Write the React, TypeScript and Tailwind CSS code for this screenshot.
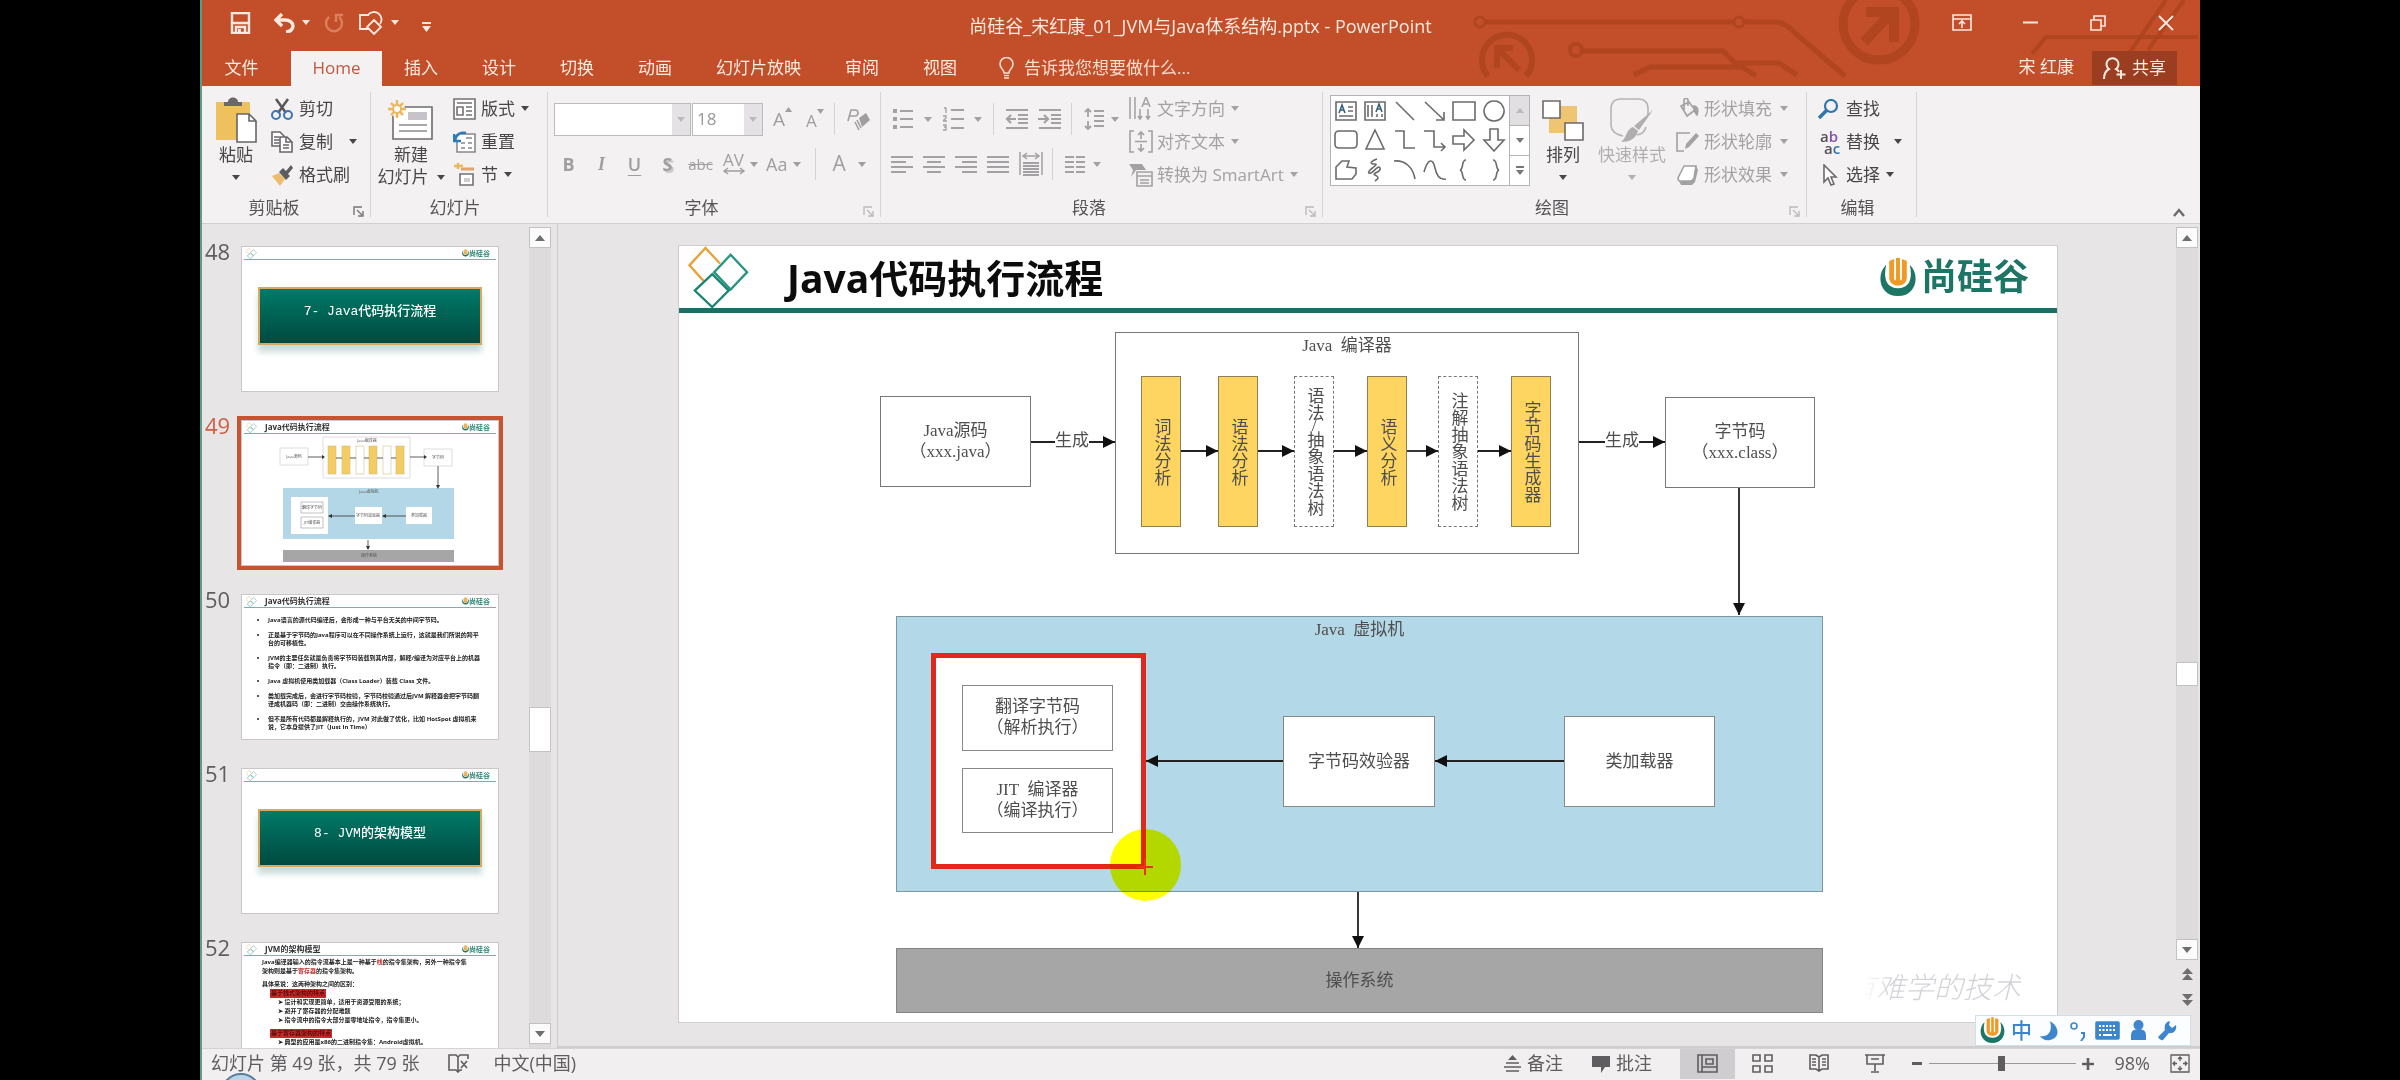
import React from "react";

type Kids = { children?: React.ReactNode };

/* ---------- primitives ---------- */

function Svg({ w, h, vb, className = "", children }: Kids & { w: number; h: number; vb?: string; className?: string }) {
  return (
    <svg width={w} height={h} viewBox={vb ?? `0 0 ${w} ${h}`} fill="none" stroke="currentColor" strokeWidth="1.6" className={`shrink-0 ${className}`} aria-hidden="true">
      {children}
    </svg>
  );
}

function Caret({ className = "" }: { className?: string }) {
  return (
    <Svg w={8} h={5} className={className}>
      <path d="M0 0h8L4 5z" fill="currentColor" stroke="none" />
    </Svg>
  );
}

function IconButton({ label, className = "", children }: Kids & { label: string; className?: string }) {
  return (
    <button type="button" aria-label={label} className={`flex shrink-0 items-center justify-center ${className}`}>
      {children}
    </button>
  );
}

function Sep({ className = "" }: { className?: string }) {
  return <span className={`h-8 w-px shrink-0 bg-[#d4d2d4] ${className}`} />;
}

function RowButton({ icon, text, caret, caretGap = "ml-1.5", muted }: { icon: React.ReactNode; text: string; caret?: boolean; caretGap?: string; muted?: boolean }) {
  return (
    <button type="button" className={`flex h-[33px] items-center whitespace-nowrap text-[17px] ${muted ? "text-[#a3a1a3]" : "text-[#484648]"}`}>
      <span className="flex w-[28px] shrink-0 items-center">{icon}</span>
      {text}
      {caret && <Caret className={caretGap} />}
    </button>
  );
}

function Group({ label, width, launcher, mutedLauncher, children }: Kids & { label: string; width: string; launcher?: boolean; mutedLauncher?: boolean }) {
  return (
    <section aria-label={label} className={`flex h-[125px] shrink-0 flex-col border-r border-[#d6d4d6] ${width}`}>
      <div className="flex h-[99px] items-start">{children}</div>
      <div className="flex h-[27px] items-end">
        <span className="flex-1 pr-2 text-center text-[17px] leading-[19px] text-[#555355]">{label}</span>
        {launcher && (
          <IconButton label={`${label}设置`} className={`mr-1.5 ${mutedLauncher ? "text-[#bcbabc]" : "text-[#777577]"}`}>
            <Svg w={11} h={11}>
              <path d="M1 9V1h8M4 4l5 5M10 5v5H5" strokeWidth="1.4" />
            </Svg>
          </IconButton>
        )}
      </div>
    </section>
  );
}

/* ---------- title bar ---------- */

function Circuit() {
  return (
    <svg viewBox="1460 0 740 86" className="absolute right-0 top-0 h-[86px] w-[740px]" fill="none" stroke="#a9421c" strokeOpacity="0.75" strokeWidth="5" aria-hidden="true">
      <circle cx="1480" cy="22" r="5" strokeWidth="3" />
      <path d="M1486 22H1733M1745 22h30c8 0 14 4 20 11l50 43" />
      <circle cx="1739" cy="22" r="5" strokeWidth="3" />
      <path d="M1488 76A25 25 0 1 1 1526 76" strokeWidth="6" />
      <path d="M1497 68V48h16M1499 50l20 20" strokeWidth="6" />
      <circle cx="1576" cy="50" r="6" strokeWidth="4" />
      <path d="M1583 51h140l12 12h44l18 12M1634 75l16-8h92l14 9" />
      <circle cx="1879" cy="24" r="36" strokeWidth="9" />
      <path d="M1864 42l28-30M1866 12h28v30" strokeWidth="10" />
      <path d="M2032 54l14-17h152" strokeWidth="4" />
      <path d="M2130 52l36-52M2148 50l36-50" strokeWidth="4" />
    </svg>
  );
}

function TitleBar() {
  return (
    <div className="relative grid h-[51px] grid-cols-[1fr_auto_1fr] items-center text-[#fde9df]">
      <div className="flex items-center pb-1.5 pl-[29px]">
        <IconButton label="保存">
          <Svg w={21} h={22}>
            <path d="M2 1h17v20H2zM2 11h17M6 21v-6h9v6" strokeWidth="2.400" />
            <path d="M8 17h3v4H8z" fill="currentColor" stroke="none" />
          </Svg>
        </IconButton>
        <IconButton label="撤消" className="ml-[22px]">
          <Svg w={22} h={20}>
            <path d="M3 7h9c5 0 8 3 8 6s-3 6-7 6" strokeWidth="3.400" />
            <path d="M9 1L3 7l6 6" strokeWidth="3.400" />
          </Svg>
        </IconButton>
        <Caret className="ml-[7px]" />
        <IconButton label="恢复" className="ml-3.5 text-[#dc7f5f]">
          <Svg w={20} h={20}>
            <path d="M5 4a8 8 0 1 0 10 0M19 2h-7v7" strokeWidth="2.400" />
          </Svg>
        </IconButton>
        <IconButton label="形状" className="ml-[15px]">
          <Svg w={26} h={24}>
            <path d="M9 18H1V4h9M9 4a7 7 0 1 1 12 9M15 9l7 7-7 7-7-7z" strokeWidth="1.800" />
          </Svg>
        </IconButton>
        <Caret className="ml-1.5" />
        <IconButton label="自定义快速访问工具栏" className="ml-[23px] pt-2">
          <Svg w={9} h={10}>
            <path d="M0 1h9" strokeWidth="2" />
            <path d="M0 4h9L4.500 10z" fill="currentColor" stroke="none" />
          </Svg>
        </IconButton>
      </div>
      <h1 className="text-[18px] leading-none">尚硅谷_宋红康_01_JVM与Java体系结构.pptx - PowerPoint</h1>
      <div className="flex justify-end pb-1.5">
        <IconButton label="功能区显示选项" className="h-10 w-[68px]">
          <Svg w={20} h={17}>
            <path d="M1 1h18v15H1zM1 5h18M10 14V7M7 10l3-3 3 3" />
          </Svg>
        </IconButton>
        <IconButton label="最小化" className="h-10 w-[68px]">
          <Svg w={15} h={3}>
            <path d="M0 1.500h15" strokeWidth="2" />
          </Svg>
        </IconButton>
        <IconButton label="还原" className="h-10 w-[68px]">
          <Svg w={16} h={16}>
            <path d="M1 5h10v10H1zM4 5V1h11v10h-4" />
          </Svg>
        </IconButton>
        <IconButton label="关闭" className="h-10 w-[68px]">
          <Svg w={16} h={16}>
            <path d="M1 1l14 14M15 1L1 15" strokeWidth="1.800" />
          </Svg>
        </IconButton>
      </div>
    </div>
  );
}

function TabBar() {
  const tabs = ["插入", "设计", "切换", "动画", "幻灯片放映", "审阅", "视图"];
  return (
    <nav className="relative flex h-[35px] text-[17px] text-[#fdebe2]">
      <button type="button" className="w-[81px] shrink-0 pb-0.5">文件</button>
      <button type="button" className="ml-[9px] w-[91px] shrink-0 bg-[#f3f1f2] pb-0.5 text-[#bd5a3c]">Home</button>
      {tabs.map((t) => (
        <button key={t} type="button" className="shrink-0 whitespace-nowrap px-[22px] pb-0.5">
          {t}
        </button>
      ))}
      <button type="button" className="ml-5 flex shrink-0 items-center whitespace-nowrap pb-0.5 text-[#fbdccd]">
        <Svg w={15} h={22} className="mr-2.5">
          <path d="M5 16c0-4-4-4-4-9a6.500 6.500 0 0 1 13 0c0 5-4 5-4 9zM5 18.500h5M5 21h5" />
        </Svg>
        告诉我您想要做什么...
      </button>
      <div className="ml-auto flex shrink-0 items-center pr-[23px]">
        <span className="pb-1">宋 红康</span>
        <button type="button" className="ml-[18px] flex h-[34px] w-[85px] items-center justify-center gap-1.5 self-start bg-[#9b3d20]">
          <Svg w={23} h={23}>
            <path d="M1 22c0-7 3-9 5-10a6 6 0 1 1 7 0c1 .5 2 1 3 3M18 13v9M13.500 17.500h9" strokeWidth="2" />
          </Svg>
          共享
        </button>
      </div>
    </nav>
  );
}

/* ---------- ribbon groups ---------- */

function BigButton({ icon, line1, line2, muted, className = "" }: { icon: React.ReactNode; line1: string; line2?: string; muted?: boolean; className?: string }) {
  return (
    <button type="button" className={`flex shrink-0 flex-col items-center pt-1 text-[17px] leading-[22px] ${muted ? "text-[#b0aeb0]" : "text-[#484648]"} ${className}`}>
      <span className="flex h-[48px] items-center">{icon}</span>
      <span className="whitespace-nowrap">{line1}</span>
      <span className="flex h-[22px] items-center whitespace-nowrap">
        {line2}
        <Caret className={line2 ? "ml-2" : ""} />
      </span>
    </button>
  );
}

function ClipboardGroup() {
  return (
    <Group label="剪贴板" width="w-[168px]" launcher>
      <BigButton
        className="ml-1.5 w-[54px]"
        line1="粘贴"
        icon={
          <Svg w={42} h={46}>
            <path d="M1 5h34v38H1z" fill="#efc15e" stroke="none" />
            <path d="M9 9V5h4c0-6 10-6 10 0h4v4z" fill="#6a686a" stroke="none" />
            <path d="M22 17h12l7 7v21H22z" fill="#fff" stroke="#666" />
            <path d="M34 17v7h7" stroke="#666" />
          </Svg>
        }
      />
      <div className="ml-2 flex flex-col">
        <RowButton
          text="剪切"
          icon={
            <Svg w={22} h={22}>
              <path d="M5 1l10 14M17 1L7 15" stroke="#59575a" strokeWidth="2.500" />
              <circle cx="5" cy="17" r="4" stroke="#3c74b4" strokeWidth="2" />
              <circle cx="17" cy="17" r="4" stroke="#3c74b4" strokeWidth="2" />
            </Svg>
          }
        />
        <RowButton
          text="复制"
          caret
          caretGap="ml-4"
          icon={
            <Svg w={22} h={22} className="text-[#686668]">
              <path d="M1 1h8l4 4v10H1zM3 6h5M3 9h5M3 12h5" fill="#fff" />
              <path d="M9 6h7l5 5v10H9z" fill="#fff" />
              <path d="M15 6v5h6M12 14h6M12 17h6" />
            </Svg>
          }
        />
        <RowButton
          text="格式刷"
          icon={
            <Svg w={22} h={22}>
              <path d="M1 12l7-3 6 6-5 7z" fill="#eebc6d" stroke="none" />
              <path d="M8 8l4-4 3 3 5-6 2 3-5 6 2 2-4 4z" fill="#5e5c5e" stroke="none" />
            </Svg>
          }
        />
      </div>
    </Group>
  );
}

function SlidesGroup() {
  return (
    <Group label="幻灯片" width="w-[177px]">
      <BigButton
        className="ml-1 w-[72px]"
        line1="新建"
        line2="幻灯片"
        icon={
          <Svg w={46} h={40}>
            <path d="M5 7h39v32H5z" fill="#fff" stroke="#6e6c6e" />
            <path d="M20 12h19v8H20z" fill="#c7c4c9" stroke="none" />
            <path d="M11 25h28M11 31h28" stroke="#8c8a8c" />
            <circle cx="9" cy="9" r="8" fill="#f2f0f1" stroke="none" />
            <path d="M9 0v18M0 9h18M3 3l12 12M15 3L3 15" stroke="#ecb65c" strokeWidth="2.400" />
            <circle cx="9" cy="9" r="4" fill="#fff" stroke="#ecb65c" strokeWidth="2" />
          </Svg>
        }
      />
      <div className="ml-1.5 flex flex-col">
        <RowButton
          text="版式"
          caret
          icon={
            <Svg w={23} h={22} className="text-[#737173]">
              <path d="M1 1h21v20H1z" fill="#fff" />
              <path d="M4 5h15M4 9h6v8H4zM13 9h6M13 13h6M13 17h6" />
            </Svg>
          }
        />
        <RowButton
          text="重置"
          icon={
            <Svg w={23} h={22} className="text-[#8b898b]">
              <path d="M8 3h14v18H4V11" fill="#fff" />
              <path d="M8 12h4M15 12h4M8 17h4M15 17h4M13 7h6" />
              <path d="M2 9c1-6 6-8 11-7M1 3v7h7" stroke="#2d7ab8" strokeWidth="2.500" />
            </Svg>
          }
        />
        <RowButton
          text="节"
          caret
          icon={
            <Svg w={23} h={23} className="text-[#737173]">
              <path d="M1 3h9M5 0v6" stroke="#ecb65c" strokeWidth="2.500" />
              <path d="M8 6h13" stroke="#e6a267" strokeWidth="3" />
              <path d="M7 11h13v11H7z" fill="#fff" />
              <path d="M11 15h6v4h-6z" fill="#cfcdcf" stroke="none" />
            </Svg>
          }
        />
      </div>
    </Group>
  );
}

function FontGroup() {
  return (
    <Group label="字体" width="w-[333px]" launcher mutedLauncher>
      <div className="flex flex-1 flex-col text-[#a09ea0]">
        <div className="flex h-[54px] items-center pl-1.5">
          <div className="flex h-[33px] w-[137px] items-stretch border border-[#bdbbbd] bg-white">
            <select aria-label="字体名称" className="min-w-0 flex-1 appearance-none bg-white" defaultValue="">
              <option value=""></option>
            </select>
            <span className="flex w-[18px] items-center justify-center bg-[#e4e2e4] text-[#bbb9bb]">
              <Caret />
            </span>
          </div>
          <div className="ml-px flex h-[33px] w-[71px] items-stretch border border-[#bdbbbd] bg-white">
            <select aria-label="字号" className="min-w-0 flex-1 appearance-none bg-white pl-1 text-[17px] text-[#9a989a]" defaultValue="18">
              <option value="18">18</option>
            </select>
            <span className="flex w-[18px] items-center justify-center bg-[#e4e2e4] text-[#bbb9bb]">
              <Caret />
            </span>
          </div>
          <IconButton label="增大字号" className="ml-2.5 items-start text-[19px] leading-6">
            A<Svg w={7} h={5}><path d="M0 5l3.500-5L7 5z" fill="currentColor" stroke="none" /></Svg>
          </IconButton>
          <IconButton label="减小字号" className="ml-[14px] items-start pt-1 text-[17px] leading-6">
            A<Svg w={7} h={5}><path d="M0 0h7L3.500 5z" fill="currentColor" stroke="none" /></Svg>
          </IconButton>
          <Sep className="ml-2.5" />
          <IconButton label="清除格式" className="ml-3">
            <Svg w={23} h={23}>
              <path d="M1 13L4 2h4c4 0 4 6 0 6H3" />
              <path d="M12 10l7-5 4 7-8 7z" fill="currentColor" stroke="none" />
              <path d="M10 12l4 8M8 14l4 8" />
            </Svg>
          </IconButton>
        </div>
        <div className="flex h-[36px] items-center pl-1 text-[18px]">
          <IconButton label="加粗" className="w-[33px] font-bold">B</IconButton>
          <IconButton label="倾斜" className="w-[33px] font-[Liberation_Serif] font-bold italic">I</IconButton>
          <IconButton label="下划线" className="w-[33px] font-semibold underline underline-offset-4">U</IconButton>
          <IconButton label="阴影" className="w-[33px] font-bold [text-shadow:2px_2px_1px_#c8c6c8]">S</IconButton>
          <IconButton label="删除线" className="w-[33px] text-[15px] line-through">abc</IconButton>
          <IconButton label="字符间距" className="w-[33px] flex-col text-[17px] leading-[14px]">
            AV
            <Svg w={22} h={8}><path d="M1 4h20M5 1L1 4l4 3M17 1l4 3-4 3" strokeWidth="1.400" /></Svg>
          </IconButton>
          <Caret />
          <IconButton label="更改大小写" className="ml-2">Aa</IconButton>
          <Caret className="ml-1.5" />
          <Sep className="ml-3.5" />
          <IconButton label="字体颜色" className="ml-4 text-[21px]">A</IconButton>
          <Caret className="ml-3" />
        </div>
      </div>
    </Group>
  );
}

function ParagraphGroup() {
  return (
    <Group label="段落" width="w-[442px]" launcher mutedLauncher>
      <div className="flex w-[248px] shrink-0 flex-col text-[#a3a1a3]">
        <div className="flex h-[54px] items-center pl-3">
          <IconButton label="项目符号">
            <Svg w={20} h={22}>
              <path d="M7 3h13M7 11h13M7 19h13" strokeWidth="2" />
              <path d="M0 3h4M0 11h4M0 19h4" strokeWidth="4" />
            </Svg>
          </IconButton>
          <Caret className="ml-[11px]" />
          <IconButton label="编号" className="ml-[11px]">
            <Svg w={21} h={24}>
              <path d="M8 3h13M8 12h13M8 21h13" strokeWidth="2" />
              <path d="M1 1h2v5M0 9h3v2L0 14h4M0 18h3v5H0M1 20h2" strokeWidth="1.300" />
            </Svg>
          </IconButton>
          <Caret className="ml-2.5" />
          <Sep className="ml-[11px]" />
          <IconButton label="减少缩进" className="ml-[11px]">
            <Svg w={24} h={20}>
              <path d="M1 1h22M13 6h10M13 10h10M13 14h10M1 19h22" strokeWidth="1.800" />
              <path d="M11 10H2M6 6l-4 4 4 4" strokeWidth="2.200" />
            </Svg>
          </IconButton>
          <IconButton label="增加缩进" className="ml-[9px]">
            <Svg w={24} h={20}>
              <path d="M1 1h22M13 6h10M13 10h10M13 14h10M1 19h22" strokeWidth="1.800" />
              <path d="M0 10h10M6 6l4 4-4 4" strokeWidth="2.200" />
            </Svg>
          </IconButton>
          <Sep className="ml-[9px]" />
          <IconButton label="行距" className="ml-3">
            <Svg w={20} h={24}>
              <path d="M10 4h10M10 9h10M10 14h10M10 19h10" strokeWidth="1.800" />
              <path d="M4 10V2M1 5l3-3 3 3M4 14v8M1 19l3 3 3-3" strokeWidth="1.800" />
            </Svg>
          </IconButton>
          <Caret className="ml-[7px]" />
        </div>
        <div className="flex h-[36px] items-center pl-2.5">
          <IconButton label="左对齐">
            <Svg w={22} h={17}><path d="M0 1h22M0 6h15M0 11h22M0 16h15" strokeWidth="2" /></Svg>
          </IconButton>
          <IconButton label="居中" className="ml-2.5">
            <Svg w={22} h={17}><path d="M0 1h22M4 6h14M0 11h22M4 16h14" strokeWidth="2" /></Svg>
          </IconButton>
          <IconButton label="右对齐" className="ml-2.5">
            <Svg w={22} h={17}><path d="M0 1h22M7 6h15M0 11h22M7 16h15" strokeWidth="2" /></Svg>
          </IconButton>
          <IconButton label="两端对齐" className="ml-2.5">
            <Svg w={22} h={17}><path d="M0 1h22M0 6h22M0 11h22M0 16h22" strokeWidth="2" /></Svg>
          </IconButton>
          <IconButton label="分散对齐" className="ml-2.5">
            <Svg w={24} h={24}>
              <path d="M1 0v23M23 0v23M4 4h16M8 1L4 4l4 3M16 1l4 3-4 3" strokeWidth="1.500" />
              <path d="M4 11h16M4 14h16M4 17h16M4 20h16M4 23h16" strokeWidth="2" />
            </Svg>
          </IconButton>
          <Sep className="ml-[9px]" />
          <IconButton label="分栏" className="ml-3">
            <Svg w={20} h={17}><path d="M0 1h9M11 1h9M0 6h9M11 6h9M0 11h9M11 11h9M0 16h9M11 16h9" strokeWidth="1.800" /></Svg>
          </IconButton>
          <Caret className="ml-2" />
        </div>
      </div>
      <div className="flex flex-col">
        <RowButton
          muted
          caret
          text="文字方向"
          icon={
            <Svg w={23} h={23}>
              <path d="M1 0v22M6 0v22M11 12v10M19 12v10M13 10l4-10 4 10M14 7h6M9 19l2 3 2-3M17 19l2 3 2-3" strokeWidth="1.500" />
            </Svg>
          }
        />
        <RowButton
          muted
          caret
          text="对齐文本"
          icon={
            <Svg w={24} h={23}>
              <path d="M5 1H1v21h4M19 1h4v21h-4M12 2v7M9 5l3-3 3 3M12 14v7M9 18l3 3 3-3M6 11.500h12" />
            </Svg>
          }
        />
        <RowButton
          muted
          caret
          text="转换为 SmartArt"
          icon={
            <Svg w={24} h={24}>
              <path d="M0 1h13l4 6H7l-5 7 2-7z" fill="currentColor" stroke="none" />
              <path d="M8 9h15v14H8z" fill="#f2f0f1" />
              <path d="M8 13h15M11 17h9M11 20h9" />
            </Svg>
          }
        />
      </div>
    </Group>
  );
}

const shapePaths: { name: string; d: string }[] = [
  { name: "直线", d: "M3 3l18 18" },
  { name: "箭头", d: "M2 3l19 18M21 13v8h-8" },
  { name: "矩形", d: "M1 3h22v18H1z" },
  { name: "椭圆", d: "M12 2a10 10 0 1 0 .1 0z" },
  { name: "圆角矩形", d: "M5 3h14q4 0 4 4v9q0 4-4 4H5q-4 0-4-4V7q0-4 4-4z" },
  { name: "三角形", d: "M12 2l9 19H3z" },
  { name: "肘形连接符", d: "M2 3h9v17h11" },
  { name: "肘形箭头", d: "M1 3h10v16h11M18 15l4 4-4 4" },
  { name: "右箭头", d: "M1 8h11V2l10 10-10 10v-6H1z" },
  { name: "下箭头", d: "M8 1v11H2l10 11 10-11h-6V1z" },
  { name: "任意多边形", d: "M2 9l6-6h7l-2 6 9 1v6l-4 5H2z" },
  { name: "自由曲线", d: "M14 1c-8 3-7 5-2 5s-9 7-6 9 9-9 11-5-9 5-5 7 4 3 0 6" },
  { name: "弧形", d: "M1 3c12-1 19 7 21 18" },
  { name: "曲线", d: "M1 14C5 0 10 0 12 10s6 12 11 11" },
  { name: "左大括号", d: "M14 2c-5 0-2 9-6 10 4 1 1 10 6 10" },
  { name: "右大括号", d: "M11 2c5 0 2 9 6 10-4 1-1 10-6 10" },
];

function DrawingGroup() {
  return (
    <Group label="绘图" width="w-[484px]" launcher mutedLauncher>
      <div className="ml-[7px] mt-[3px] flex h-[91px] w-[200px] shrink-0 border border-[#b5b3b5] bg-white">
        <div className="grid flex-1 grid-cols-6 grid-rows-3 place-items-center text-[#6c6a6c]">
          <IconButton label="文本框">
            <Svg w={22} h={20}>
              <path d="M1 1h20v18H1zM13 6h5M13 10h5M4 15h14" />
              <path d="M4 12l3-8 3 8M5 9h4" stroke="#35617a" />
            </Svg>
          </IconButton>
          <IconButton label="竖排文本框">
            <Svg w={22} h={20}>
              <path d="M1 1h20v18H1zM4 4v12M8 4v12M13 13v3M18 13v3" />
              <path d="M12 11l3-8 3 8M13 8h4" stroke="#35617a" />
            </Svg>
          </IconButton>
          {shapePaths.map((s) => (
            <IconButton key={s.name} label={s.name}>
              <Svg w={24} h={24}><path d={s.d} /></Svg>
            </IconButton>
          ))}
        </div>
        <div className="flex w-5 flex-col border-l border-[#b5b3b5] text-[#777577]">
          <IconButton label="上一行" className="flex-1 bg-[#e1dfe1] text-[#bbb9bb]"><Caret className="rotate-180" /></IconButton>
          <IconButton label="下一行" className="flex-1 border-y border-[#b5b3b5]"><Caret /></IconButton>
          <IconButton label="其他" className="flex-1 flex-col gap-0.5"><span className="h-0.5 w-2 bg-[#777577]" /><Caret /></IconButton>
        </div>
      </div>
      <BigButton
        className="ml-2 w-[50px]"
        line1="排列"
        icon={
          <Svg w={42} h={42}>
            <path d="M17 7h18v18H17zM7 18h16v16H7z" fill="#efc473" stroke="none" />
            <path d="M1 2h17v17H1zM23 24h18v17H23z" fill="#fff" stroke="#6c6a6c" />
          </Svg>
        }
      />
      <BigButton
        muted
        className="ml-2 w-[72px]"
        line1="快速样式"
        icon={
          <Svg w={46} h={46}>
            <path d="M14 39c-8-2-12-5-12-12V12Q2 2 12 2h17q10 0 10 10v6M37 30c-1 5-4 7-9 8" stroke="#b6b4b6" />
            <path d="M44 13L30 33l-5-4zM24 30l5 4c-2 8-9 11-17 11 6-4 5-13 12-15z" fill="#b0aeb0" stroke="none" />
          </Svg>
        }
      />
      <div className="ml-2 flex flex-col">
        <RowButton muted caret caretGap="ml-2" text="形状填充" icon={
          <Svg w={23} h={22}>
            <path d="M5 8l8-4 6 8-8 6zM8 12V2c0-2 4-2 4 0v6" />
            <path d="M18 8c5 1 4 6 3 9-2-2-3-5-3-9z" fill="currentColor" />
          </Svg>} />
        <RowButton muted caret caretGap="ml-2" text="形状轮廓" icon={
          <Svg w={23} h={22}>
            <path d="M14 2H1v18h7" />
            <path d="M20 2l3 3-10 11-4 2 1-5z" fill="currentColor" stroke="none" />
          </Svg>} />
        <RowButton muted caret caretGap="ml-2" text="形状效果" icon={
          <Svg w={23} h={22}>
            <path d="M8 2h12l-2 12q-1 3-4 3H4q-2 0-2-3z" fill="#fff" />
            <path d="M20 2l2 4-3 12-3 3H5l-2-4h12l3-3z" fill="currentColor" stroke="none" />
          </Svg>} />
      </div>
    </Group>
  );
}

function EditingGroup() {
  return (
    <Group label="编辑" width="w-[110px]">
      <div className="ml-[11px] flex flex-col">
        <RowButton text="查找" icon={
          <Svg w={22} h={20} className="text-[#2f75ad]">
            <circle cx="13" cy="7" r="6" strokeWidth="2.200" />
            <path d="M9 11l-8 8" strokeWidth="3.500" />
          </Svg>} />
        <RowButton text="替换" caret caretGap="ml-3.5" icon={
          <span className="flex flex-col text-[15px] font-semibold leading-[12px]">
            <span className="text-[#554d58]">a<span className="text-[#8653a5]">b</span></span>
            <span className="pl-1.5 text-[#554d58]">a<span className="text-[#2f75ad]">c</span></span>
          </span>} />
        <RowButton text="选择" caret icon={
          <Svg w={22} h={22} className="text-[#6c6a6c]">
            <path d="M6 1v17l4-4 3 7 3-1-3-7h5z" fill="#fff" />
          </Svg>} />
      </div>
    </Group>
  );
}

function Ribbon() {
  return (
    <div className="flex h-[138px] shrink-0 border-b border-[#d2d0d2] bg-[#f3f1f2] pl-px pt-1.5">
      <ClipboardGroup />
      <SlidesGroup />
      <FontGroup />
      <ParagraphGroup />
      <DrawingGroup />
      <EditingGroup />
      <IconButton label="折叠功能区" className="mb-1 ml-auto mr-[15px] self-end text-[#6c6a6c]">
        <Svg w={12} h={12}><path d="M1 9l5-6 5 6" strokeWidth="2.400" /></Svg>
      </IconButton>
    </div>
  );
}

/* ---------- brand marks ---------- */

function ULogo({ w, h }: { w: number; h: number }) {
  return (
    <svg width={w} height={h} viewBox="0 0 38 40" fill="none" className="shrink-0" aria-hidden="true">
      <path d="M7 7C-4 17 0 39 19 39S42 17 31 7c3 12 1 24-12 24S4 19 7 7z" fill="#1d7565" />
      <path d="M10 3v17c0 11 18 11 18 0V3l-5-2v19c0 4-2 4-2 0V0h-4v20c0 4-2 4-2 0V1z" fill="#ef9a24" />
    </svg>
  );
}

function Diamonds({ w, h }: { w: number; h: number }) {
  return (
    <svg width={w} height={h} viewBox="0 0 64 64" fill="none" strokeWidth="2.400" className="shrink-0" aria-hidden="true">
      <path d="M17 37L1.500 20 18 2l15 16" stroke="#e5a33a" />
      <path d="M44 9l17 18-17 18-17-18z" stroke="#2a9483" />
      <path d="M25 29l17 17-17 17L7 46z" stroke="#1d8574" />
    </svg>
  );
}

/* ---------- thumbnails ---------- */

function ThumbFrame({ title, children }: Kids & { title?: string }) {
  return (
    <div className="flex h-[146px] w-[258px] flex-col border border-[#c9c7c9] bg-white">
      <div className="mx-0.5 flex h-[13px] shrink-0 items-center border-b border-[#6fb5aa] pl-0.5 pr-1.5">
        <Diamonds w={11} h={11} />
        <span className="ml-2 flex-1 text-[8px] font-bold leading-none text-[#333]">{title}</span>
        <ULogo w={7} h={8} />
        <span className="text-[7px] font-bold leading-none text-[#2d8576]">尚硅谷</span>
      </div>
      {children}
    </div>
  );
}

function ChapterThumb({ text }: { text: string }) {
  return (
    <ThumbFrame>
      <div className="mx-4 mt-[27px] flex h-[58px] items-center justify-center whitespace-nowrap border-2 border-[#d9a860] bg-linear-to-b from-[#007a68] to-[#004a3f] pb-2 font-['Liberation_Mono','Noto_Sans_CJK_SC',monospace] text-[13px] font-medium text-white shadow-[0_7px_6px_#c9dcda]">
        {text}
      </div>
    </ThumbFrame>
  );
}

function DiagramThumb() {
  const bars = [86, 100, 114, 127, 141, 154];
  return (
    <ThumbFrame title="Java代码执行流程">
      <svg viewBox="0 0 256 131" className="flex-1" aria-hidden="true">
        <g fill="#fff" stroke="#cfcdd2" strokeWidth="0.7">
          <path d="M38 14h28v17H38zM81 3h87v41H81zM182 15h28v17h-28z" />
        </g>
        {bars.map((x, i) => (
          <rect key={x} x={x} y="12" width="8" height="28" fill={i === 2 || i === 4 ? "#fff" : "#f4cd62"} stroke="#c9b27a" strokeWidth="0.5" />
        ))}
        <path d="M41 54h171v51H41z" fill="#b3d7e6" />
        <path d="M41 116h171v12H41z" fill="#a6a6a6" />
        <g fill="#fff"><path d="M49 63h37v37H49zM113 73h27v17h-27zM164 73h26v17h-26z" /></g>
        <g stroke="#333" strokeWidth="0.8" fill="none">
          <path d="M66 23h14M168 23h14M196 32v21M113 82H87M164 82h-23M126 106v9M94 24h6M108 24h6M122 24h5M135 24h6M149 24h5" />
        </g>
        <g fill="#333">
          <path d="M80 21l3 2-3 2zM182 21l3 2-3 2zM194 51h4l-2 4zM90 80v4l-4-2zM144 80v4l-4-2zM124 112h4l-2 4z" />
        </g>
        <g stroke="#9a989a" strokeWidth="0.6" fill="#fff">
          <path d="M59 68h22v11H59zM59 83h22v11H59z" />
        </g>
        <g fill="#555" fontSize="4" textAnchor="middle">
          <text x="52" y="24">Java源码</text>
          <text x="125" y="8">Java编译器</text>
          <text x="196" y="25">字节码</text>
          <text x="127" y="59">Java虚拟机</text>
          <text x="70" y="75">翻译字节码</text>
          <text x="70" y="90">JIT编译器</text>
          <text x="126" y="83">字节码效验器</text>
          <text x="177" y="83">类加载器</text>
          <text x="127" y="123">操作系统</text>
        </g>
      </svg>
    </ThumbFrame>
  );
}

const executionNotes = [
  "Java语言的源代码编译后，会形成一种与平台无关的中间字节码。",
  "正是基于字节码的Java程序可以在不同操作系统上运行，这就是我们所说的跨平台的可移植性。",
  "JVM的主要任务就是负责将字节码装载到其内部，解释/编译为对应平台上的机器指令（即：二进制）执行。",
  "Java 虚拟机使用类加载器（Class Loader）装载 Class 文件。",
  "类加载完成后，会进行字节码校验，字节码校验通过后JVM 解释器会把字节码翻译成机器码（即：二进制）交由操作系统执行。",
  "但不是所有代码都是解释执行的，JVM 对此做了优化，比如 HotSpot 虚拟机来说，它本身提供了JIT（Just In Time）",
];

function NotesThumb() {
  return (
    <ThumbFrame title="Java代码执行流程">
      <ul className="flex flex-col gap-[7px] pl-[26px] pr-4 pt-2 text-[6px] font-bold leading-[8px] text-[#222]">
        {executionNotes.map((n) => (
          <li key={n} className="list-disc">{n}</li>
        ))}
      </ul>
    </ThumbFrame>
  );
}

function ModelThumb() {
  return (
    <ThumbFrame title="JVM的架构模型">
      <div className="flex flex-col pl-5 pr-4 pt-0.5 text-[6px] font-bold leading-[9px] text-[#222]">
        <p>Java编译器输入的指令流基本上是一种基于<span className="text-[#c23030]">栈</span>的指令集架构，另外一种指令集</p>
        <p>架构则是基于<span className="text-[#c23030]">寄存器</span>的指令集架构。</p>
        <p className="mt-1">具体来说：这两种架构之间的区别：</p>
        <p className="ml-2 w-fit bg-[#c62a2a] px-px text-[#5b0c0c]">基于栈式架构的特点</p>
        <ul className="pl-4">
          <li>➤ 设计和实现更简单，适用于资源受限的系统；</li>
          <li>➤ 避开了寄存器的分配难题</li>
          <li>➤ 指令流中的指令大部分是零地址指令，指令集更小。</li>
        </ul>
        <p className="ml-2 mt-1 w-fit bg-[#c62a2a] px-px text-[#5b0c0c]">基于寄存器架构的特点</p>
        <ul className="pl-4">
          <li>➤ 典型的应用是x86的二进制指令集：Android虚拟机。</li>
        </ul>
      </div>
    </ThumbFrame>
  );
}

function VerticalScroll({ className = "", children }: Kids & { className?: string }) {
  return <div className={`flex w-[22px] shrink-0 flex-col bg-[#dddbdc] ${className}`}>{children}</div>;
}

function ScrollArrow({ label, up }: { label: string; up?: boolean }) {
  return (
    <IconButton label={label} className="h-[21px] w-full border border-[#c3c1c3] bg-[#fcfbfc] text-[#6f6d6f]">
      <Svg w={10} h={6}>{up ? <path d="M0 6h10L5 0z" fill="currentColor" stroke="none" /> : <path d="M0 0h10L5 6z" fill="currentColor" stroke="none" />}</Svg>
    </IconButton>
  );
}

function Sidebar() {
  const items: { n: number; body: React.ReactNode }[] = [
    { n: 48, body: <ChapterThumb text="7- Java代码执行流程" /> },
    { n: 49, body: <DiagramThumb /> },
    { n: 50, body: <NotesThumb /> },
    { n: 51, body: <ChapterThumb text="8- JVM的架构模型" /> },
    { n: 52, body: <ModelThumb /> },
  ];
  return (
    <aside className="flex w-[356px] shrink-0 overflow-hidden border-r border-[#cccacc]">
      <ol className="flex flex-1 flex-col gap-7 overflow-hidden pt-[22px]">
        {items.map(({ n, body }) => (
          <li key={n} className="flex shrink-0">
            <span className={`w-[39px] pl-[3px] text-[22px] leading-[11px] ${n === 49 ? "text-[#cf5f42]" : "text-[#5f5d5f]"}`}>{n}</span>
            <button type="button" aria-label={`幻灯片 ${n}`} className={`text-left ${n === 49 ? "outline-4 outline-[#c8532f]" : ""}`}>
              {body}
            </button>
          </li>
        ))}
      </ol>
      <VerticalScroll className="mr-[6px] mt-[3px]">
        <ScrollArrow label="向上滚动" up />
        <span className="flex-[460]" />
        <span className="h-[45px] border border-[#c3c1c3] bg-white" />
        <span className="flex-[272]" />
        <ScrollArrow label="向下滚动" />
        <span className="h-1" />
      </VerticalScroll>
    </aside>
  );
}

/* ---------- slide ---------- */

function Node({ className, children }: Kids & { className: string }) {
  return <div className={`absolute flex flex-col items-center justify-center whitespace-nowrap border text-center ${className}`}>{children}</div>;
}

function Stage({ left, dashed, text }: { left: string; dashed?: boolean; text: string }) {
  const [head, tail] = text.split("/");
  return (
    <div className={`absolute top-[63px] flex h-[151px] w-10 flex-col items-center justify-center border leading-none ${dashed ? "border-dashed border-[#777] bg-white" : "border-[#8d8054] bg-[#fdd560]"} ${left}`}>
      <span className="[writing-mode:vertical-rl]">{head}</span>
      {tail && <span className="leading-[10px]">/</span>}
      {tail && <span className="[writing-mode:vertical-rl]">{tail}</span>}
    </div>
  );
}

type Arrow = [number, number, number, number];
const arrows: Arrow[] = [
  [151, 129, 235, 129],
  [301, 138, 338, 138],
  [378, 138, 414, 138],
  [454, 138, 487, 138],
  [527, 138, 558, 138],
  [598, 138, 631, 138],
  [699, 129, 785, 129],
  [859, 175, 859, 302],
  [403, 448, 266, 448],
  [684, 448, 555, 448],
  [478, 579, 478, 635],
];

function Diagram() {
  return (
    <div className="relative ml-[201px] h-[704px] w-[944px] font-['Liberation_Serif','Noto_Sans_CJK_SC',serif] text-[17px] leading-[21px] text-[#4f4d4f]">
      <Node className="left-0 top-[83px] h-[91px] w-[151px] border-[#777] bg-white pb-0.5">
        <span>Java源码</span>
        <span>（xxx.java）</span>
      </Node>
      <Node className="left-[235px] top-[19px] h-[222px] w-[464px] justify-start border-[#777] bg-white pt-0.5">Java&nbsp; 编译器</Node>
      <Stage left="left-[261px]" text="词法分析" />
      <Stage left="left-[338px]" text="语法分析" />
      <Stage left="left-[414px]" dashed text="语法/抽象语法树" />
      <Stage left="left-[487px]" text="语义分析" />
      <Stage left="left-[558px]" dashed text="注解抽象语法树" />
      <Stage left="left-[631px]" text="字节码生成器" />
      <Node className="left-[785px] top-[84px] h-[91px] w-[150px] border-[#777] bg-white pb-0.5">
        <span>字节码</span>
        <span>（xxx.class）</span>
      </Node>
      <Node className="left-4 top-[303px] h-[276px] w-[927px] justify-start border-[#7d97a2] bg-[#b3d8e7] pt-0.5">Java&nbsp; 虚拟机</Node>
      <div className="absolute left-[51px] top-[340px] h-[216px] w-[215px] border-5 border-[#e0281f] bg-white" />
      <Node className="left-[82px] top-[372px] h-[66px] w-[151px] border-[#888] bg-white pb-0.5">
        <span>翻译字节码</span>
        <span>（解析执行）</span>
      </Node>
      <Node className="left-[82px] top-[455px] h-[65px] w-[151px] border-[#888] bg-white pb-0.5">
        <span>JIT&nbsp; 编译器</span>
        <span>（编译执行）</span>
      </Node>
      <Node className="left-[403px] top-[403px] h-[91px] w-[152px] border-[#888] bg-white">字节码效验器</Node>
      <Node className="left-[684px] top-[403px] h-[91px] w-[151px] border-[#888] bg-white">类加载器</Node>
      <Node className="left-4 top-[635px] h-[65px] w-[927px] border-[#858585] bg-[#a6a6a6]">操作系统</Node>
      <svg className="pointer-events-none absolute left-0 top-0" width="944" height="704" fill="none" stroke="#222" strokeWidth="1.800" aria-hidden="true">
        <defs>
          <marker id="head" viewBox="0 0 12 12" refX="12" refY="6" markerWidth="12" markerHeight="12" markerUnits="userSpaceOnUse" orient="auto">
            <path d="M0 0l12 6-12 6z" fill="#111" stroke="none" />
          </marker>
        </defs>
        {arrows.map(([x1, y1, x2, y2]) => (
          <line key={`${x1}-${y1}`} x1={x1} y1={y1} x2={x2} y2={y2} markerEnd="url(#head)" />
        ))}
      </svg>
      <span className="absolute left-[175px] top-[117px] bg-white">生成</span>
      <span className="absolute left-[725px] top-[117px] bg-white">生成</span>
      <span className="absolute left-[230px] top-[516px] h-[72px] w-[71px] rounded-full bg-[#ffff00] mix-blend-multiply" />
      <svg className="absolute left-[257px] top-[546px]" width="16" height="16" stroke="#f0301c" strokeWidth="2" aria-hidden="true">
        <path d="M8 0v16M0 8h16" />
      </svg>
    </div>
  );
}

function Slide() {
  return (
    <article className="relative flex min-w-0 flex-1 flex-col overflow-hidden bg-white outline outline-[#cfcdcf]">
      <header className="flex h-[62px] shrink-0 items-center pl-2 pr-[28px]">
        <Diamonds w={64} h={62} />
        <h2 className="ml-9 flex-1 text-[39px] font-bold leading-none text-[#0c0c0c]">Java代码执行流程</h2>
        <ULogo w={38} h={39} />
        <span className="ml-1 text-[36px] font-bold leading-none text-[#1d7565]">尚硅谷</span>
      </header>
      <div className="h-[5px] shrink-0 bg-[#1b6f65]" />
      <Diagram />
      <div className="absolute bottom-3 right-9 whitespace-nowrap bg-linear-to-r from-white from-10% to-[#d3d1d6] to-25% bg-clip-text font-['Liberation_Serif','Noto_Sans_CJK_SC',serif] text-[29px] font-light italic text-transparent">
        有难学的技术
      </div>
    </article>
  );
}

function ImeBar() {
  return (
    <div className="absolute bottom-0 right-[9px] flex h-[31px] w-[216px] items-center border border-[#cfe0e6] bg-[#fbfdfe] pl-1 text-[#3d86cd]">
      <ULogo w={25} h={27} />
      <span className="ml-1.5 text-[21px] font-medium leading-none">中</span>
      <Svg w={18} h={20} className="ml-2"><path d="M10 0c10 6 10 17 0 19-5 1-8-1-10-4 8 2 13-5 10-15z" fill="currentColor" stroke="none" /></Svg>
      <Svg w={15} h={20} className="ml-3">
        <circle cx="4" cy="5" r="3" />
        <path d="M11 12h3v4l-3 4" strokeWidth="2" />
      </Svg>
      <Svg w={25} h={19} className="ml-2.5">
        <rect x="1" y="1" width="23" height="17" rx="1" fill="currentColor" />
        <path d="M4 5h17M4 9h17" stroke="#fff" strokeWidth="2" strokeDasharray="2 1.500" />
        <path d="M4 14h2M8 14h9M19 14h2" stroke="#fff" strokeWidth="2" />
      </Svg>
      <Svg w={17} h={21} className="ml-2.5">
        <circle cx="8.500" cy="5" r="5" fill="currentColor" stroke="none" />
        <path d="M1 20v-5q0-6 7.500-6T16 15v5z" fill="currentColor" stroke="none" />
      </Svg>
      <Svg w={20} h={21} className="ml-2.5">
        <path d="M13 1c-5 1-6 5-5 9l-7 7q2 4 5 3l6-7c5 1 8-3 7-8l-4 3-3-3z" fill="currentColor" stroke="none" />
      </Svg>
    </div>
  );
}

function Workspace() {
  return (
    <main className="relative flex min-w-0 flex-1 border-b-2 border-[#cfcdcf]">
      <div className="flex min-w-0 flex-1 pb-6 pl-[121px] pr-[119px] pt-[22px]">
        <Slide />
      </div>
      <VerticalScroll className="mr-0.5 mt-[3px]">
        <ScrollArrow label="上一屏" up />
        <span className="flex-[415]" />
        <span className="h-[24px] border border-[#c3c1c3] bg-white" />
        <span className="flex-[253]" />
        <ScrollArrow label="下一屏" />
        <div className="flex h-[86px] flex-col items-center gap-3.5 bg-[#e7e5e6] pt-2 text-[#6f6d6f]">
          <IconButton label="上一张幻灯片">
            <Svg w={11} h={12}><path d="M0 6h11L5.500 0zM0 12h11L5.500 6z" fill="currentColor" stroke="none" /></Svg>
          </IconButton>
          <IconButton label="下一张幻灯片">
            <Svg w={11} h={12}><path d="M0 0h11L5.500 6zM0 6h11l-5.500 6z" fill="currentColor" stroke="none" /></Svg>
          </IconButton>
        </div>
      </VerticalScroll>
      <ImeBar />
    </main>
  );
}

/* ---------- status bar ---------- */

function StatusBar() {
  return (
    <footer className="relative flex h-8 shrink-0 items-center overflow-hidden border-t border-[#d5d3d5] bg-[#f1eff0] pb-0.5 pl-[9px] text-[18px] text-[#5f5d5f]">
      <span className="absolute left-[19px] top-6 h-10 w-10 rounded-full border-2 border-[#5a7f9a] bg-[#b9d5e8]" />
      <span className="relative whitespace-nowrap">幻灯片 第 49 张，共 79 张</span>
      <IconButton label="拼写检查" className="ml-7">
        <Svg w={22} h={19}>
          <path d="M10 3L8 1H1v15h7l2 2 2-2h2M10 3v15M10 3l2-2h8v4M13 7l6 7M19 7l-6 7" />
        </Svg>
      </IconButton>
      <button type="button" className="ml-6 whitespace-nowrap">中文(中国)</button>
      <div className="ml-auto flex h-full shrink-0 items-center">
        <button type="button" className="flex items-center gap-1.5">
          <Svg w={17} h={18}><path d="M4 5l4.500-5L13 5z" fill="currentColor" stroke="none" /><path d="M2 8h13M0 12h17M2 16h13" /></Svg>
          备注
        </button>
        <button type="button" className="ml-[29px] flex items-center gap-1.5">
          <Svg w={18} h={18}><path d="M0 1h18v11h-5l-4 6v-6H0z" fill="currentColor" stroke="none" /></Svg>
          批注
        </button>
        <IconButton label="普通视图" className="ml-7 h-[31px] w-[55px] bg-[#cfcdcf]">
          <Svg w={21} h={19}><path d="M1 1h19v17H1zM5 1v17M9 5h7v5H9zM5 13h15" /></Svg>
        </IconButton>
        <IconButton label="幻灯片浏览" className="w-[56px]">
          <Svg w={22} h={19}><path d="M1 1h7v6H1zM13 1h7v6h-7zM1 12h7v6H1zM13 12h7v6h-7z" /></Svg>
        </IconButton>
        <IconButton label="阅读视图" className="w-[56px]">
          <Svg w={20} h={19}><path d="M10 3L7 1H1v14h6l3 2 3-2h6V1h-6zM10 3v15M3 5h4M3 8h4M3 11h4M13 5h4M13 8h4M13 11h4" /></Svg>
        </IconButton>
        <IconButton label="幻灯片放映" className="w-[56px]">
          <Svg w={20} h={19}><path d="M0 1h20M2 1v9h16V1M6 5h8M10 10v7M6 18h8" /></Svg>
        </IconButton>
        <IconButton label="缩小" className="ml-1.5 w-4">
          <Svg w={10} h={3}><path d="M0 1.500h10" strokeWidth="3" /></Svg>
        </IconButton>
        <input
          type="range"
          aria-label="显示比例"
          defaultValue={49}
          className="mx-1 h-4 w-[147px] appearance-none bg-transparent [&::-webkit-slider-runnable-track]:h-px [&::-webkit-slider-runnable-track]:bg-[#9a989a] [&::-webkit-slider-thumb]:-mt-[7px] [&::-webkit-slider-thumb]:h-[15px] [&::-webkit-slider-thumb]:w-[7px] [&::-webkit-slider-thumb]:appearance-none [&::-webkit-slider-thumb]:bg-[#5f5d5f]"
        />
        <IconButton label="放大" className="w-4">
          <Svg w={12} h={12}><path d="M0 6h12M6 0v12" strokeWidth="2.600" /></Svg>
        </IconButton>
        <span className="ml-3.5 w-[40px] text-right">98%</span>
        <IconButton label="使幻灯片适应当前窗口" className="ml-5 mr-[10px]">
          <Svg w={20} h={19}><path d="M1 1h18v17H1zM10 3v4M10 12v4M3 9.500h4M13 9.500h4M8 5l2-2 2 2M8 14l2 2 2-2M5 7.500l-2 2 2 2M15 7.500l2 2-2 2" strokeWidth="1.300" /></Svg>
        </IconButton>
      </div>
    </footer>
  );
}

export default function App() {
  return (
    <div className="flex h-screen justify-center bg-black">
      <div className="flex w-5/6 flex-col overflow-hidden border-l-2 border-[#5c9d88] bg-[#e7e5e6] font-['Open_Sans','Noto_Sans_CJK_SC',sans-serif]">
        <header className="relative -ml-px shrink-0 bg-[#c24f29]">
          <Circuit />
          <TitleBar />
          <TabBar />
        </header>
        <Ribbon />
        <div className="flex min-h-0 flex-1">
          <Sidebar />
          <Workspace />
        </div>
        <StatusBar />
      </div>
    </div>
  );
}
